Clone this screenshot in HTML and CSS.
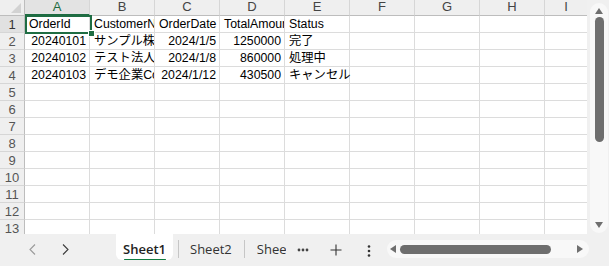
FILE: index.html
```html
<!DOCTYPE html>
<html lang="ja">
<head>
<meta charset="utf-8">
<title>Sheet</title>
<link rel="stylesheet" href="styles.css">
</head>
<body>
<div class="app">
  <div class="sheet-area">
    <div class="grid">
      <div class="corner"><svg class="corner-tri" width="10" height="10" viewBox="0 0 10 10"><polygon points="10,0 10,10 0,10" fill="#d2d2d2"/></svg></div>
      <div class="ch active">A</div><div class="ch">B</div><div class="ch">C</div><div class="ch">D</div><div class="ch">E</div><div class="ch">F</div><div class="ch">G</div><div class="ch">H</div><div class="ch last">I</div>

      <div class="rh active">1</div>
      <div class="c sel-cell">OrderId<div class="sel"><div class="handle"></div></div></div><div class="c">CustomerName</div><div class="c">OrderDate</div><div class="c">TotalAmount</div><div class="c">Status</div><div class="c"></div><div class="c"></div><div class="c"></div><div class="c last"></div>

      <div class="rh">2</div>
      <div class="c r">20240101</div><div class="c">サンプル株式会社</div><div class="c r">2024/1/5</div><div class="c r">1250000</div><div class="c over">完了</div><div class="c"></div><div class="c"></div><div class="c"></div><div class="c last"></div>

      <div class="rh">3</div>
      <div class="c r">20240102</div><div class="c">テスト法人</div><div class="c r">2024/1/8</div><div class="c r">860000</div><div class="c over">処理中</div><div class="c"></div><div class="c"></div><div class="c"></div><div class="c last"></div>

      <div class="rh">4</div>
      <div class="c r">20240103</div><div class="c">デモ企業Co</div><div class="c r">2024/1/12</div><div class="c r">430500</div><div class="c over">キャンセル</div><div class="c"></div><div class="c"></div><div class="c"></div><div class="c last"></div>

      <div class="rh">5</div><div class="c"></div><div class="c"></div><div class="c"></div><div class="c"></div><div class="c"></div><div class="c"></div><div class="c"></div><div class="c"></div><div class="c last"></div>
      <div class="rh">6</div><div class="c"></div><div class="c"></div><div class="c"></div><div class="c"></div><div class="c"></div><div class="c"></div><div class="c"></div><div class="c"></div><div class="c last"></div>
      <div class="rh">7</div><div class="c"></div><div class="c"></div><div class="c"></div><div class="c"></div><div class="c"></div><div class="c"></div><div class="c"></div><div class="c"></div><div class="c last"></div>
      <div class="rh">8</div><div class="c"></div><div class="c"></div><div class="c"></div><div class="c"></div><div class="c"></div><div class="c"></div><div class="c"></div><div class="c"></div><div class="c last"></div>
      <div class="rh">9</div><div class="c"></div><div class="c"></div><div class="c"></div><div class="c"></div><div class="c"></div><div class="c"></div><div class="c"></div><div class="c"></div><div class="c last"></div>
      <div class="rh">10</div><div class="c"></div><div class="c"></div><div class="c"></div><div class="c"></div><div class="c"></div><div class="c"></div><div class="c"></div><div class="c"></div><div class="c last"></div>
      <div class="rh">11</div><div class="c"></div><div class="c"></div><div class="c"></div><div class="c"></div><div class="c"></div><div class="c"></div><div class="c"></div><div class="c"></div><div class="c last"></div>
      <div class="rh">12</div><div class="c"></div><div class="c"></div><div class="c"></div><div class="c"></div><div class="c"></div><div class="c"></div><div class="c"></div><div class="c"></div><div class="c last"></div>
      <div class="rh">13</div><div class="c"></div><div class="c"></div><div class="c"></div><div class="c"></div><div class="c"></div><div class="c"></div><div class="c"></div><div class="c"></div><div class="c last"></div>
    </div>
    <div class="vscroll">
      <div class="vtrack">
        <svg class="arrow-up" width="8" height="6" viewBox="0 0 8 6"><polygon points="4,0 8,6 0,6" fill="#6f6f6f"/></svg>
        <div class="vthumb"></div>
        <div class="vspacer"></div>
        <svg class="arrow-down" width="8" height="6" viewBox="0 0 8 6"><polygon points="0,0 8,0 4,6" fill="#6f6f6f"/></svg>
      </div>
    </div>
  </div>
  <div class="bottom-bar">
    <div class="nav">
      <svg class="nav-btn prev" width="7" height="11" viewBox="0 0 7 11"><polyline points="6,0.5 1,5.5 6,10.5" fill="none" stroke="#9a9a9a" stroke-width="1.1"/></svg>
      <svg class="nav-btn next" width="7" height="11" viewBox="0 0 7 11"><polyline points="1,0.5 6,5.5 1,10.5" fill="none" stroke="#3c3c3c" stroke-width="1.1"/></svg>
    </div>
    <div class="tab active-tab"><span class="tab-label">Sheet1</span><span class="tab-underline"></span></div>
    <div class="sep"></div>
    <div class="tab plain"><span class="tab-label">Sheet2</span></div>
    <div class="sep sep2"></div>
    <div class="tab clipped"><span class="tab-label">Sheet3</span></div>
    <svg class="more" width="12" height="4" viewBox="0 0 12 4"><circle cx="2" cy="2" r="1.4" fill="#444"/><circle cx="6" cy="2" r="1.4" fill="#444"/><circle cx="10" cy="2" r="1.4" fill="#444"/></svg>
    <svg class="plus" width="12" height="12" viewBox="0 0 12 12"><path d="M6 0.5V11.5M0.5 6H11.5" stroke="#333" stroke-width="1.1" fill="none"/></svg>
    <svg class="kebab" width="4" height="12" viewBox="0 0 4 12"><circle cx="2" cy="1.5" r="1.3" fill="#333"/><circle cx="2" cy="6" r="1.3" fill="#333"/><circle cx="2" cy="10.5" r="1.3" fill="#333"/></svg>
    <div class="htrack">
      <svg class="arrow-left" width="6" height="8" viewBox="0 0 6 8"><polygon points="0,4 6,0 6,8" fill="#6f6f6f"/></svg>
      <div class="hthumb"></div>
      <div class="hspacer"></div>
      <svg class="arrow-right" width="6" height="8" viewBox="0 0 6 8"><polygon points="0,0 6,4 0,8" fill="#6f6f6f"/></svg>
    </div>
  </div>
</div>
</body>
</html>
```

FILE: styles.css
```css
html, body {
  margin: 0;
  padding: 0;
  background: #ffffff;
}

.app {
  width: 609px;
  height: 266px;
  display: flex;
  flex-direction: column;
  overflow: hidden;
  font-family: "Liberation Sans", "Noto Sans CJK JP", sans-serif;
}

.sheet-area {
  height: 234px;
  display: flex;
  flex-direction: row;
  overflow: hidden;
}

.grid {
  width: 587px;
  flex: none;
  display: grid;
  grid-template-columns: 25px repeat(7, 65px) 65px 42px;
  grid-template-rows: 16px;
  grid-auto-rows: 17px;
  overflow: hidden;
  align-content: start;
  background: #ffffff;
}

.corner {
  background: #efefef;
  border-right: 1px solid #bdbdbd;
  border-bottom: 1px solid #bdbdbd;
  box-sizing: border-box;
  display: flex;
  justify-content: flex-end;
  align-items: flex-end;
  padding: 0 3px 2px 0;
}

.corner-tri {
  display: block;
}

.ch {
  background: #efefef;
  color: #444444;
  font-size: 13px;
  text-align: center;
  line-height: 14px;
  border-right: 1px solid #d6d6d6;
  border-bottom: 1px solid #bdbdbd;
  box-sizing: border-box;
}

.ch.active {
  background: #e3e3e3;
  color: #1d6b41;
  border-bottom: 2px solid #1d6b41;
}

.ch.last {
  border-right: none;
}

.rh {
  background: #efefef;
  color: #555555;
  font-size: 13px;
  text-align: center;
  line-height: 17px;
  border-right: 1px solid #bdbdbd;
  border-bottom: 1px solid #d6d6d6;
  box-sizing: border-box;
}

.rh.active {
  background: #e1e1e1;
  color: #333333;
}

.c {
  font-size: 12.3px;
  line-height: 17px;
  color: #000000;
  padding: 0 3px 0 4px;
  white-space: nowrap;
  overflow: hidden;
  border-right: 1px solid #dcdcdc;
  border-bottom: 1px solid #dcdcdc;
  box-sizing: border-box;
}

.c.r {
  text-align: right;
}

.c.over {
  overflow: visible;
  position: relative;
  z-index: 1;
}

.c.last {
  border-right: none;
}

.sel-cell {
  position: relative;
  overflow: visible;
}

.sel {
  position: absolute;
  left: 0;
  top: -1px;
  width: 67px;
  height: 19px;
  border: 2px solid #1f6d43;
  box-sizing: border-box;
  z-index: 2;
}

.handle {
  position: absolute;
  right: -5px;
  bottom: -5px;
  width: 7px;
  height: 7px;
  background: #1f6d43;
  border: 1px solid #ffffff;
  box-sizing: border-box;
}

.vscroll {
  width: 22px;
  flex: none;
  background: #f0f0f0;
  padding: 3px 1px 0 3px;
  box-sizing: border-box;
}

.vtrack {
  height: 230px;
  background: #f8f8f8;
  border-radius: 9px;
  display: flex;
  flex-direction: column;
  align-items: center;
  padding: 5px 0 5px;
  box-sizing: border-box;
}

.arrow-up, .arrow-down {
  display: block;
  flex: none;
}

.vthumb {
  width: 9px;
  height: 125px;
  margin-top: 3px;
  background: #6e6e6e;
  border-radius: 4.5px;
  flex: none;
}

.vspacer {
  flex: 1;
}

.bottom-bar {
  height: 32px;
  background: #f0f0f0;
  display: flex;
  flex-direction: row;
  align-items: flex-start;
  font-family: "Open Sans", "Liberation Sans", sans-serif;
  font-size: 13px;
  color: #333333;
}

.nav {
  width: 116px;
  height: 32px;
  flex: none;
  display: flex;
  align-items: center;
}

.nav-btn {
  display: block;
  margin-top: -1px;
}

.nav-btn.prev {
  margin-left: 29px;
}

.nav-btn.next {
  margin-left: 26px;
}

.tab {
  flex: none;
  height: 26px;
  display: flex;
  flex-direction: column;
  align-items: center;
  justify-content: flex-start;
  box-sizing: border-box;
}

.tab-label {
  display: block;
  line-height: 18px;
  margin-top: 6px;
  white-space: nowrap;
}

.active-tab {
  width: 57px;
  background: #ffffff;
  border-radius: 0 0 6px 6px;
  color: #222222;
  font-weight: 600;
}

.tab-underline {
  display: block;
  width: 42px;
  height: 2px;
  margin-top: 1px;
  background: #107c41;
  border-radius: 1px;
}

.sep {
  flex: none;
  width: 1px;
  height: 18px;
  margin-top: 6px;
  margin-left: 5px;
  background: #c6c6c6;
}

.sep2 {
  margin-left: 12px;
}

.plain {
  margin-left: 11px;
}

.clipped {
  margin-left: 12px;
  width: 29px;
  overflow: hidden;
  align-items: flex-start;
}

.more {
  flex: none;
  display: block;
  margin-left: 11px;
  margin-top: 14px;
}

.plus {
  flex: none;
  display: block;
  margin-left: 21px;
  margin-top: 10px;
}

.kebab {
  flex: none;
  display: block;
  margin-left: 25px;
  margin-top: 11px;
}

.htrack {
  flex: none;
  width: 202px;
  height: 18px;
  margin-left: 16px;
  margin-top: 6px;
  background: #f8f8f8;
  border-radius: 9px;
  display: flex;
  flex-direction: row;
  align-items: center;
  padding: 0 6px 0 3px;
  box-sizing: border-box;
}

.arrow-left, .arrow-right {
  display: block;
  flex: none;
}

.hthumb {
  flex: none;
  width: 151px;
  height: 9px;
  margin-left: 4px;
  background: #6e6e6e;
  border-radius: 4.5px;
}

.hspacer {
  flex: 1;
}
```
